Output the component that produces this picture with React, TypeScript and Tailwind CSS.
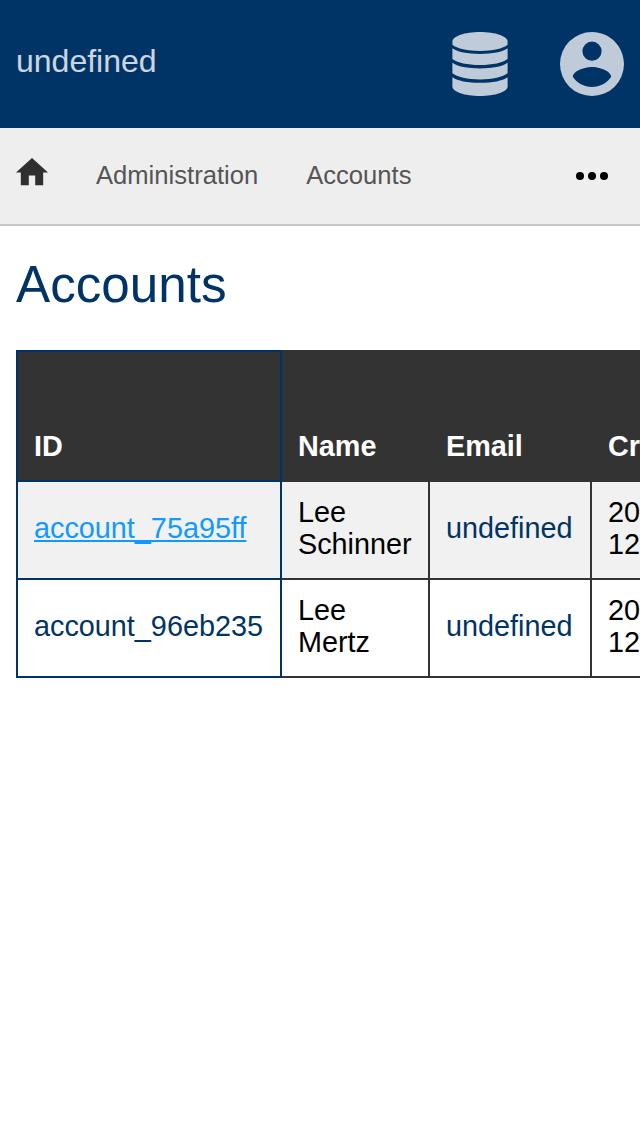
import type { ReactNode } from "react";

const accounts = [
  { id: "account_75a95ff", first: "Lee", last: "Schinner", active: true },
  { id: "account_96eb235", first: "Lee", last: "Mertz", active: false },
];

function IdCell({ children }: { children: ReactNode }) {
  return <td className="border-2 border-[#003366] px-4 pb-1 text-[#003366]">{children}</td>;
}

function Cell({ children, link }: { children: ReactNode; link?: boolean }) {
  return (
    <td className={link ? "border-2 border-[#333] px-4 pb-1 text-[#003366]" : "border-2 border-[#333] px-4 pb-1 text-black"}>
      {children}
    </td>
  );
}

export default function App() {
  return (
    <div className="h-[1136px] w-[640px] overflow-hidden bg-white font-['Liberation_Sans',Arial,sans-serif]">
      <header className="flex h-32 items-center justify-between bg-[#003366] px-4">
        <span className="-mt-1.5 text-[32px] leading-9 text-white/80">undefined</span>
        <div className="flex items-center gap-[52px]">
          <svg className="h-16 w-14" viewBox="0 0 56 64" fill="#fff" fillOpacity="0.75">
            <path d="M28 0C43.3 0 55.6 4.2 55.6 9.5V12.7C51 16.6 40.500 18.900 28 18.900S5 16.600 .4 12.700V9.500C.4 4.200 12.700 0 28 0Z" />
            <path d="M.4 16.300C5.400 19.900 15.500 22 28 22S50.600 19.900 55.600 16.300V27C51 30.700 40.500 33 28 33S5 30.700 .4 27Z" />
            <path d="M.4 30.700C5.400 34.300 15.500 36.400 28 36.400S50.600 34.300 55.600 30.700V41.300C51 45.100 40.500 47.400 28 47.400S5 45.100 .4 41.300Z" />
            <path d="M.4 45.200C5.400 48.800 15.500 50.800 28 50.800S50.600 48.800 55.600 45.200V54.500C55.600 59.800 43.300 64 28 64S.4 59.800 .4 54.500Z" />
          </svg>
          <svg className="size-16" viewBox="2 2 20 20" fill="#fff" fillOpacity="0.75">
            <path d="M12 19.2C9.5 19.2 7.29 17.92 6 16C6.03 14 10 12.9 12 12.9C14 12.9 17.97 14 18 16C16.71 17.92 14.5 19.2 12 19.2M12 5A3 3 0 0 1 15 8A3 3 0 0 1 12 11A3 3 0 0 1 9 8A3 3 0 0 1 12 5M12 2A10 10 0 0 0 2 12A10 10 0 0 0 12 22A10 10 0 0 0 22 12C22 6.47 17.5 2 12 2Z" />
          </svg>
        </div>
      </header>

      <nav className="flex h-[98px] items-center border-b-2 border-[#c8c8c8] bg-[#eee] px-4 text-[25.6px] leading-8 text-[#555]">
        <svg className="-mt-2 h-[27.2px] w-8" viewBox="2 3 20 17" fill="#2f2f2f">
          <path d="M10 20v-6h4v6h5v-8h3L12 3 2 12h3v8z" />
        </svg>
        <span className="-mt-0.5 ml-12">Administration</span>
        <span className="-mt-0.5 ml-12">Accounts</span>
        <svg className="mr-4 ml-auto h-2 w-8" viewBox="0 0 32 8" fill="#000">
          <circle cx="4" cy="4" r="4" />
          <circle cx="16" cy="4" r="4" />
          <circle cx="28" cy="4" r="4" />
        </svg>
      </nav>

      <main className="px-4">
        <h1 className="pt-[30px] text-[51.2px] leading-[58px] text-[#003366]">Accounts</h1>
        <table className="mt-9 w-[776px] table-fixed border-collapse text-[28.8px] leading-8">
          <colgroup>
            <col className="w-[264px]" />
            <col className="w-[148px]" />
            <col className="w-[162px]" />
            <col className="w-[200px]" />
          </colgroup>
          <thead>
            <tr className="h-[130px] bg-[#333] text-left align-bottom text-white">
              <th className="border-2 border-[#003366] px-4 pb-[18px] font-bold">ID</th>
              <th className="border-2 border-[#333] px-4 pb-[18px] font-bold">Name</th>
              <th className="border-2 border-[#333] px-4 pb-[18px] font-bold">Email</th>
              <th className="border-2 border-[#333] px-4 pb-[18px] font-bold">Created</th>
            </tr>
          </thead>
          <tbody>
            {accounts.map((account) => (
              <tr key={account.id} className="h-[98px] odd:bg-[#f1f1f1]">
                <IdCell>
                  <a className={account.active ? "text-[#1199ff] underline" : ""}>{account.id}</a>
                </IdCell>
                <Cell>
                  {account.first}
                  <br />
                  {account.last}
                </Cell>
                <Cell link>undefined</Cell>
                <Cell>
                  20
                  <br />
                  12
                </Cell>
              </tr>
            ))}
          </tbody>
        </table>
      </main>
    </div>
  );
}
